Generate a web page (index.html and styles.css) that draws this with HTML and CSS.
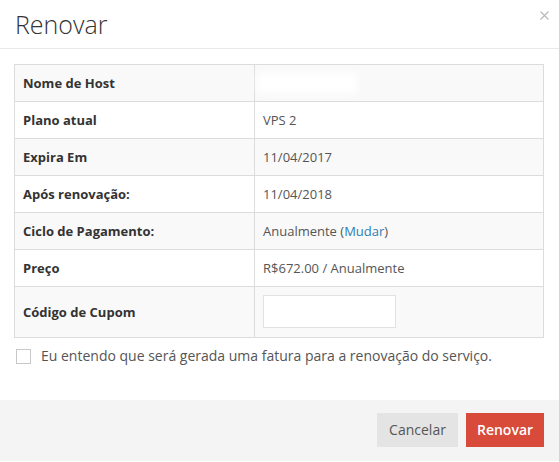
FILE: index.html
```html
<!DOCTYPE html>
<html lang="pt">
<head>
<meta charset="utf-8">
<title>Renovar</title>
<link rel="stylesheet" href="styles.css">
</head>
<body>
<div class="modal">
  <div class="modal-header">
    <h1 class="modal-title">Renovar</h1>
    <button class="close" aria-label="Fechar">
      <svg width="9" height="9" viewBox="0 0 9 9"><path d="M0.5 0.5 L8.5 8.5 M8.5 0.5 L0.5 8.5" stroke="#b8b8b8" stroke-width="1.1" fill="none"/></svg>
    </button>
  </div>
  <div class="modal-body">
    <table class="info">
      <tr class="odd"><th>Nome de Host</th><td><span class="blurred"></span></td></tr>
      <tr><th>Plano atual</th><td>VPS 2</td></tr>
      <tr class="odd"><th>Expira Em</th><td>11/04/2017</td></tr>
      <tr><th>Após renovação:</th><td>11/04/2018</td></tr>
      <tr class="odd"><th>Ciclo de Pagamento:</th><td>Anualmente (<a href="#" class="link">Mudar</a>)</td></tr>
      <tr><th>Preço</th><td>R$672.00 / Anualmente</td></tr>
      <tr class="odd coupon"><th>Código de Cupom</th><td><input type="text" class="coupon-input"></td></tr>
    </table>
    <label class="agree">
      <span class="checkbox"></span>
      <span>Eu entendo que será gerada uma fatura para a renovação do serviço.</span>
    </label>
  </div>
  <div class="modal-footer">
    <button class="btn btn-default">Cancelar</button>
    <button class="btn btn-danger">Renovar</button>
  </div>
</div>
</body>
</html>
```

FILE: styles.css
```css
html, body {
  margin: 0;
  padding: 0;
  background: #fff;
}
body {
  font-family: "Open Sans", "Liberation Sans", sans-serif;
  font-size: 13px;
  color: #555;
}
.modal {
  width: 559px;
}
.modal-header {
  display: flex;
  justify-content: space-between;
  padding: 9px 10px 8px 15px;
  border-bottom: 1px solid #e9e9e9;
}
.modal-title {
  margin: 0;
  font-size: 25px;
  font-weight: 300;
  line-height: 31px;
  color: #333;
}
.close {
  align-self: flex-start;
  margin-top: 2px;
  padding: 0;
  border: 0;
  background: none;
  width: 9px;
  height: 9px;
  display: block;
}
.close svg { display: block; }
.modal-body {
  padding: 15px 15px 0 14px;
}
.info {
  width: 530px;
  border-collapse: collapse;
  border: 1px solid #dcdcdc;
}
.info th, .info td {
  border: 1px solid #dcdcdc;
  padding: 8px 8px;
  line-height: 20px;
  text-align: left;
  vertical-align: middle;
}
.info th {
  width: 223px;
  font-weight: 700;
  color: #333;
}
.info td {
  color: #555;
}
.info tr.odd {
  background: #f9f9f9;
}
.blurred {
  display: inline-block;
  width: 100px;
  height: 20px;
  vertical-align: top;
  background: #fff;
  filter: blur(4px);
  margin-left: -6px;
}
.link {
  color: #2e7eb5;
  text-decoration: none;
}
.coupon-input {
  display: block;
  box-sizing: border-box;
  width: 133px;
  height: 33px;
  border: 1px solid #e2e2e2;
  background: #fff;
  margin: 0;
  padding: 0 8px;
}
.info tr.coupon th, .info tr.coupon td {
  padding-top: 8px;
  padding-bottom: 9px;
}
.agree {
  display: flex;
  align-items: center;
  gap: 10px;
  margin: 8px 0 0 2px;
  padding-bottom: 34px;
  line-height: 20px;
  font-size: 14px;
  color: #555;
}
.checkbox {
  box-sizing: border-box;
  width: 15px;
  height: 15px;
  border: 1px solid #c8c8c8;
  background: #fff;
  flex: none;
}
.modal-footer {
  background: #f4f4f4;
  display: flex;
  justify-content: flex-end;
  gap: 8px;
  padding: 13px 15px 14px;
}
.btn {
  height: 34px;
  border: 0;
  padding: 0 14px;
  font-family: "Open Sans", "Liberation Sans", sans-serif;
  font-size: 14px;
  line-height: 34px;
}
.btn-default {
  background: #e4e4e4;
  color: #555;
  width: 81px;
  padding: 0;
}
.btn-danger {
  background: #d84a39;
  color: #fff;
  font-weight: 600;
  width: 78px;
  padding: 0;
}
```
